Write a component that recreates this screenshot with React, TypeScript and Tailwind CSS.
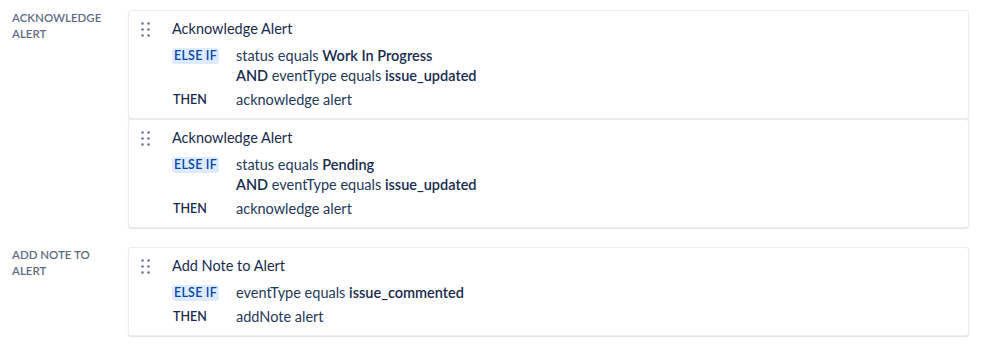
import React from "react";

type Cond = React.ReactNode;
type Rule = { title: string; conds: Cond[]; then: string };

const B = ({ children }: { children: React.ReactNode }) => (
  <span className="font-semibold text-[#172b4d]">{children}</span>
);

const sections: { label: string[]; rules: Rule[] }[] = [
  {
    label: ["ACKNOWLEDGE", "ALERT"],
    rules: [
      {
        title: "Acknowledge Alert",
        conds: [
          <>status equals <B>Work In Progress</B></>,
          <><B>AND</B> eventType equals <B>issue_updated</B></>,
        ],
        then: "acknowledge alert",
      },
      {
        title: "Acknowledge Alert",
        conds: [
          <>status equals <B>Pending</B></>,
          <><B>AND</B> eventType equals <B>issue_updated</B></>,
        ],
        then: "acknowledge alert",
      },
    ],
  },
  {
    label: ["ADD NOTE TO", "ALERT"],
    rules: [
      {
        title: "Add Note to Alert",
        conds: [<>eventType equals <B>issue_commented</B></>],
        then: "addNote alert",
      },
    ],
  },
];

function Handle() {
  return (
    <svg width="9" height="15" viewBox="0 0 9 15" className="mt-[2px] block">
      {[0, 6].map((x) =>
        [0, 6, 12].map((y) => (
          <circle key={`${x}-${y}`} cx={x + 1.5} cy={y + 1.5} r={1.3} fill="#6b778c" />
        ))
      )}
    </svg>
  );
}

function Card({ rule }: { rule: Rule }) {
  return (
    <div className="flex rounded-[3px] border border-[#ebecf0] bg-white pt-2 pb-2 shadow-[0_1px_1px_rgba(9,30,66,0.13)]">
      <div className="w-[43px] pl-3 pt-[1px]">
        <Handle />
      </div>
      <div className="flex flex-col">
        <div className="h-5 text-[14.5px] leading-5 text-[#172b4d]">{rule.title}</div>
        <div className="mt-[7px] flex">
          <div className="w-16 pt-[2px]">
            <div className="h-4 w-[47px] rounded-[3px] bg-[#deebff] text-center text-[12.5px] font-semibold leading-4 tracking-[0.2px] text-[#0747a6]">
              ELSE IF
            </div>
          </div>
          <div className="flex flex-col text-[14.5px] leading-5 text-[#253858]">
            {rule.conds.map((c, i) => (
              <div key={i} className="h-5">{c}</div>
            ))}
          </div>
        </div>
        <div className="mt-1 flex h-5">
          <div className="w-16 pl-[1px] text-[12.5px] font-semibold leading-5 text-[#172b4d]">THEN</div>
          <div className="text-[14.5px] leading-5 text-[#253858]">{rule.then}</div>
        </div>
      </div>
    </div>
  );
}

export default function App() {
  return (
    <div
      className="flex w-[999px] h-[353px] flex-col gap-[19px] bg-white pt-[10px] pr-[30px] pl-3"
      style={{ fontFamily: "Lato, 'Noto Sans', sans-serif" }}
    >
      {sections.map((s, i) => (
        <div key={i} className="flex">
          <div className="w-[116px] shrink-0 text-[11.5px] font-semibold leading-4 text-[#5e6c84]">
            {s.label.map((l) => (
              <div key={l}>{l}</div>
            ))}
          </div>
          <div className="flex flex-1 flex-col">
            {s.rules.map((r, j) => (
              <Card key={j} rule={r} />
            ))}
          </div>
        </div>
      ))}
    </div>
  );
}
